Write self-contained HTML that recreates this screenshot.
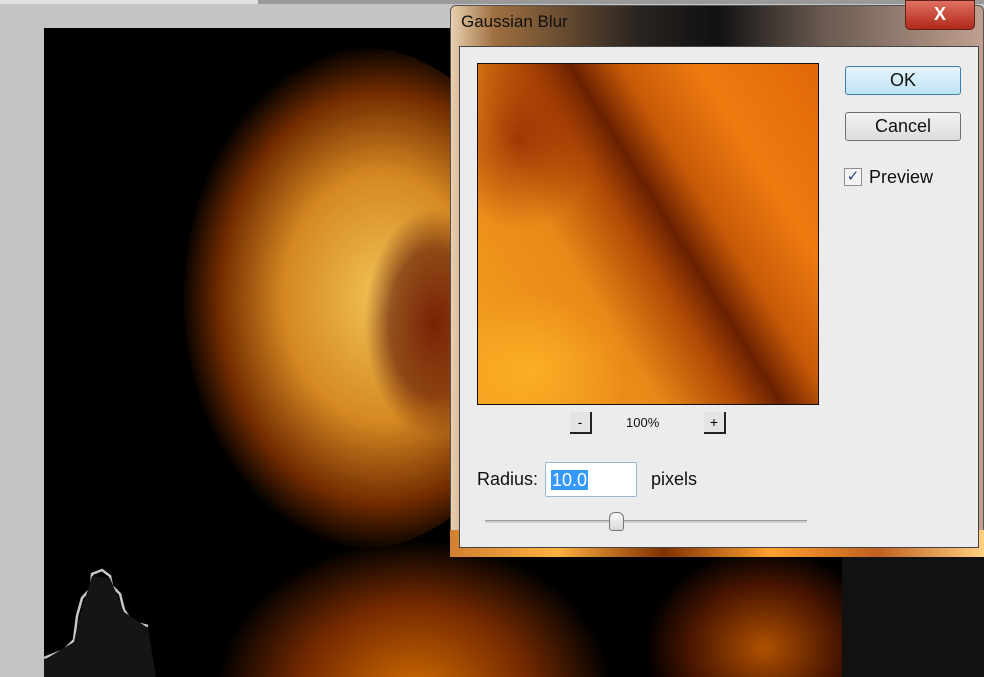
<!DOCTYPE html><html><head><style>
*{margin:0;padding:0;box-sizing:border-box}
html,body{width:984px;height:677px;overflow:hidden}
body{background:#c4c4c4;position:relative;font-family:"Liberation Sans",sans-serif}
.abs{position:absolute}
#canvas{left:44px;top:28px;width:940px;height:649px;background:#000;overflow:hidden}
.f{position:absolute;border-radius:50%}
</style></head><body>
<div class="abs" style="left:0;top:0;width:984px;height:4px;background:#9a9a9a"></div>
<div class="abs" style="left:0;top:0;width:258px;height:4px;background:#e0e0e0"></div>
<div id="canvas" class="abs">
 <div class="f" style="left:140px;top:20px;width:360px;height:500px;background:radial-gradient(ellipse at 55% 50%,rgba(255,205,90,.95) 0%,rgba(250,160,40,.85) 35%,rgba(210,80,0,.55) 58%,rgba(0,0,0,0) 72%)"></div>
 <div class="f" style="left:320px;top:180px;width:140px;height:230px;background:radial-gradient(ellipse,rgba(110,20,0,.9) 0%,rgba(90,15,0,.6) 45%,rgba(0,0,0,0) 70%)"></div>
 <div class="f" style="left:170px;top:510px;width:400px;height:260px;background:radial-gradient(ellipse at 50% 60%,rgba(230,120,0,.9) 0%,rgba(170,60,0,.7) 40%,rgba(0,0,0,0) 70%)"></div>
 <div class="f" style="left:600px;top:520px;width:240px;height:200px;background:radial-gradient(ellipse,rgba(220,100,0,.8) 0%,rgba(140,40,0,.5) 45%,rgba(0,0,0,0) 70%)"></div>
 <div class="abs" style="left:798px;top:528px;width:142px;height:121px;background:#111"></div>
 <svg class="abs" style="left:0;top:490px" width="120" height="159"><path d="M0 140 L20 132 L30 122 L33 98 L38 80 L47 70 L48 56 L58 52 L66 58 L68 68 L76 76 L80 92 L88 104 L104 108" fill="none" stroke="#c8c8c8" stroke-width="2.5"/><path d="M0 142 L30 124 L35 100 L48 58 L66 60 L80 94 L104 110 L112 159 L0 159Z" fill="#151515"/></svg>
</div>
<div class="abs" style="left:450px;top:5px;width:534px;height:552px;background:linear-gradient(90deg,#e8d0b0 0%,#a07040 8%,#2a2420 35%,#111 50%,#6a5a50 70%,#c0a090 100%);border:1px solid #555;border-radius:6px 6px 0 0"></div>
<div class="abs" style="left:450px;top:530px;width:534px;height:27px;background:linear-gradient(90deg,#d08030,#ffb040,#803000,#ffa030,#c06020,#ffd080)"></div>
<div class="abs" style="left:461px;top:12px;font-size:17px;color:#111">Gaussian Blur</div>
<div class="abs" style="left:905px;top:0;width:70px;height:30px;background:linear-gradient(#e07060,#b02818);border:1px solid #602020;border-radius:0 0 5px 5px;color:#fff;font-weight:bold;font-size:18px;text-align:center;line-height:26px">X</div>
<div class="abs" style="left:459px;top:46px;width:520px;height:502px;background:#ececec;border:1px solid #444"></div>
<div class="abs" style="left:477px;top:63px;width:342px;height:342px;border:1px solid #111;background:
radial-gradient(ellipse 110px 130px at 12% 22%,rgba(140,35,0,.75),rgba(0,0,0,0) 70%),
radial-gradient(ellipse 140px 110px at 15% 90%,rgba(255,180,40,.8),rgba(0,0,0,0) 70%),
linear-gradient(58deg,#f3a020 0%,#e98818 33%,#b04a05 47%,#6a2000 55%,#c85a08 64%,#ee7a10 78%,#e06808 100%)"></div>
<div class="abs" style="left:845px;top:66px;width:116px;height:29px;border:1px solid #3c7fb1;border-radius:3px;background:linear-gradient(#e6f5fc,#bfe3f5);font-size:18px;text-align:center;line-height:27px;color:#111">OK</div>
<div class="abs" style="left:845px;top:112px;width:116px;height:29px;border:1px solid #707070;border-radius:3px;background:linear-gradient(#f2f2f2,#dcdcdc);font-size:18px;text-align:center;line-height:27px;color:#111">Cancel</div>
<div class="abs" style="left:844px;top:168px;width:18px;height:18px;border:1px solid #8e8f8f;background:#f4f4f4;color:#2a3e8a;font-size:15px;line-height:16px;text-align:center">✓</div>
<div class="abs" style="left:869px;top:167px;font-size:18px;color:#111">Preview</div>
<div class="abs" style="left:570px;top:412px;width:22px;height:22px;background:#e4e4e4;border-right:2px solid #222;border-bottom:2px solid #222;font-size:14px;text-align:center;line-height:20px">-</div>
<div class="abs" style="left:626px;top:415px;font-size:13px;color:#111">100%</div>
<div class="abs" style="left:704px;top:412px;width:22px;height:22px;background:#e4e4e4;border-right:2px solid #222;border-bottom:2px solid #222;font-size:14px;text-align:center;line-height:20px">+</div>
<div class="abs" style="left:477px;top:469px;font-size:18px;color:#111">Radius:</div>
<div class="abs" style="left:545px;top:462px;width:92px;height:35px;border:1px solid #9ab8d6;background:#fff;border-radius:2px"></div>
<div class="abs" style="left:551px;top:470px;height:20px;padding:0 1px;background:#3399ff;color:#fff;font-size:18px;line-height:20px">10.0</div>
<div class="abs" style="left:651px;top:469px;font-size:18px;color:#111">pixels</div>
<div class="abs" style="left:485px;top:520px;width:322px;height:3px;background:#d0d0d0;border-top:1px solid #999"></div>
<div class="abs" style="left:609px;top:512px;width:15px;height:19px;background:linear-gradient(#fafafa,#d8d8d8);border:1px solid #777;border-radius:6px 6px 3px 3px"></div>
</body></html>
